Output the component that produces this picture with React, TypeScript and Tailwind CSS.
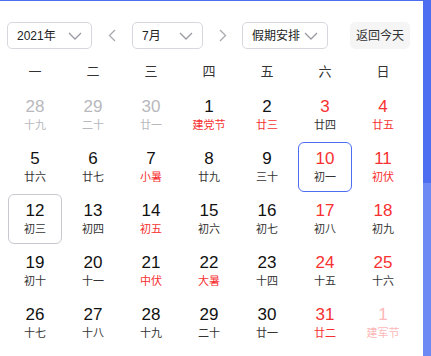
import React from 'react';

type Day = {
  n: number;
  l: string;
  numRed?: boolean;
  lunRed?: boolean;
  other?: 'prev' | 'next';
  mark?: 'today' | 'selected';
};

const days: Day[] = [
  { n: 28, l: '十九', other: 'prev' },
  { n: 29, l: '二十', other: 'prev' },
  { n: 30, l: '廿一', other: 'prev' },
  { n: 1, l: '建党节', lunRed: true },
  { n: 2, l: '廿三', lunRed: true },
  { n: 3, l: '廿四', numRed: true },
  { n: 4, l: '廿五', numRed: true, lunRed: true },
  { n: 5, l: '廿六' },
  { n: 6, l: '廿七' },
  { n: 7, l: '小暑', lunRed: true },
  { n: 8, l: '廿九' },
  { n: 9, l: '三十' },
  { n: 10, l: '初一', numRed: true, mark: 'selected' },
  { n: 11, l: '初伏', numRed: true, lunRed: true },
  { n: 12, l: '初三', mark: 'today' },
  { n: 13, l: '初四' },
  { n: 14, l: '初五', lunRed: true },
  { n: 15, l: '初六' },
  { n: 16, l: '初七' },
  { n: 17, l: '初八', numRed: true },
  { n: 18, l: '初九', numRed: true },
  { n: 19, l: '初十' },
  { n: 20, l: '十一' },
  { n: 21, l: '中伏', lunRed: true },
  { n: 22, l: '大暑', lunRed: true },
  { n: 23, l: '十四' },
  { n: 24, l: '十五', numRed: true },
  { n: 25, l: '十六', numRed: true },
  { n: 26, l: '十七' },
  { n: 27, l: '十八' },
  { n: 28, l: '十九' },
  { n: 29, l: '二十' },
  { n: 30, l: '廿一' },
  { n: 31, l: '廿二', numRed: true, lunRed: true },
  { n: 1, l: '建军节', other: 'next' },
];

const weekdays = ['一', '二', '三', '四', '五', '六', '日'];

const Chevron = () => (
  <svg width="14" height="8" viewBox="0 0 14 8" fill="none" stroke="#9a9aa3" strokeWidth="1.3">
    <path d="M1 1l6 6 6-6" />
  </svg>
);

const Arrow = ({ dir }: { dir: 'l' | 'r' }) => (
  <svg width="8" height="13" viewBox="0 0 8 13" fill="none" stroke="#a8a8b0" strokeWidth="1.3">
    <path d={dir === 'l' ? 'M7 1L1.5 6.5 7 12' : 'M1 1l5.5 5.5L1 12'} />
  </svg>
);

const Select = ({ label, w }: { label: string; w: string }) => (
  <div className={`${w} h-[27px] border border-[#d7d8de] rounded-[5px] flex items-center justify-between pl-[9px] pr-[9px] text-[12px] text-[#222]`}>
    <span>{label}</span>
    <Chevron />
  </div>
);

const Cell = ({ d }: { d: Day }) => {
  let numCls = 'text-[#111]';
  let lunCls = 'text-[#333]';
  if (d.numRed) numCls = 'text-[#f73131]';
  if (d.lunRed) lunCls = 'text-[#f73131]';
  if (d.other === 'prev') {
    numCls = 'text-[#b8b8bd]';
    lunCls = 'text-[#b8b8bd]';
  }
  if (d.other === 'next') {
    numCls = 'text-[#fdb7b7]';
    lunCls = 'text-[#fdb7b7]';
  }
  const box =
    d.mark === 'selected'
      ? 'border border-[#4e6ef2]'
      : d.mark === 'today'
      ? 'border border-[#c8c9cf]'
      : 'border border-transparent';
  return (
    <div className="h-[52px] px-[2px] py-[1px]">
      <div className={`h-full rounded-[6px] ${box} flex flex-col items-center justify-center`}>
        <div className={`text-[17px] leading-[18px] ${numCls}`}>{d.n}</div>
        <div className={`text-[11px] leading-[14px] mt-[2px] ${lunCls}`}>{d.l}</div>
      </div>
    </div>
  );
};

const App: React.FC = () => {
  return (
    <div className="w-[431px] h-[356px] flex overflow-hidden bg-white" style={{ fontFamily: '"Liberation Sans", "Noto Sans CJK SC", sans-serif' }}>
      <main className="w-[423px] h-full border-t border-[#4e6ef2] flex flex-col">
        <header className="flex items-center pl-[7px] pt-[15px] h-[54px] shrink-0">
          <Select label="2021年" w="w-[85px]" />
          <div className="w-[40px] flex justify-center">
            <Arrow dir="l" />
          </div>
          <Select label="7月" w="w-[71px]" />
          <div className="w-[39px] flex justify-center">
            <Arrow dir="r" />
          </div>
          <Select label="假期安排" w="w-[86px]" />
          <button className="ml-[22px] w-[60px] h-[27px] rounded-[5px] bg-[#f5f5f6] text-[12px] text-[#333]">返回今天</button>
        </header>
        <div className="w-[406px] ml-[6px]">
          <div className="grid grid-cols-7 h-[34px] items-center">
            {weekdays.map((w) => (
              <div key={w} className="text-center text-[13px] text-[#333]">{w}</div>
            ))}
          </div>
          <div className="grid grid-cols-7">
            {days.map((d, i) => (
              <Cell key={i} d={d} />
            ))}
          </div>
        </div>
      </main>
      <div className="w-[8px] h-full flex flex-col">
        <div className="h-[183px] bg-[#4e6ef2]" />
        <div className="flex-1 bg-[#6d89f3]" />
      </div>
    </div>
  );
};

export default App;
